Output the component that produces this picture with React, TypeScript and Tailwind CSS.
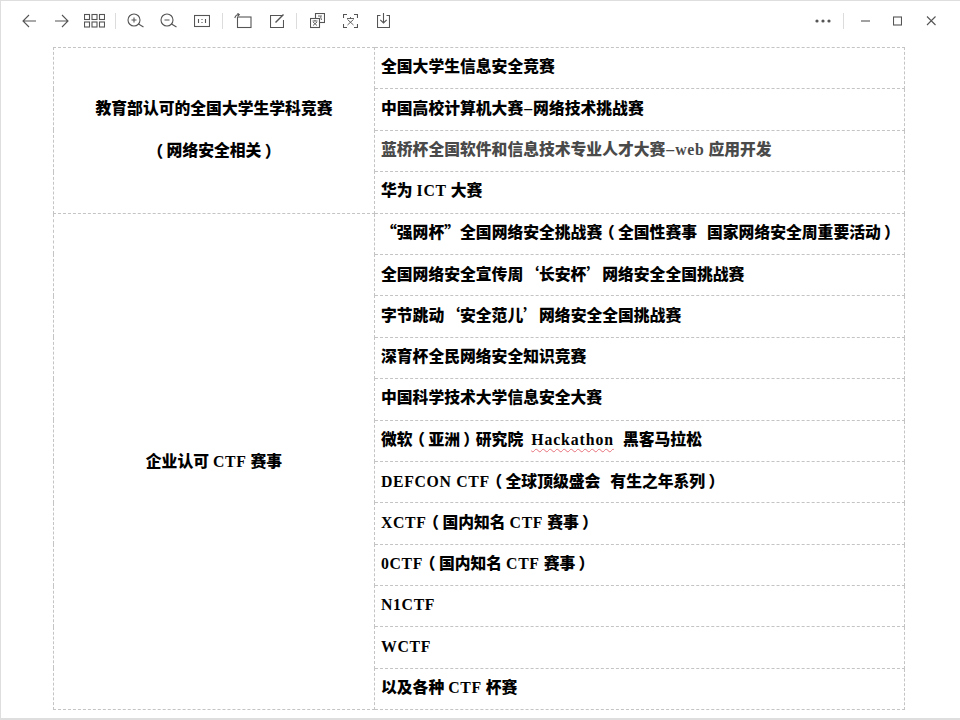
const font = '"Liberation Serif", "Noto Sans CJK SC", serif';

const Ic = ({ w = 20, children }: { w?: number; children: React.ReactNode }) => (
  <svg width={w} height={16} viewBox={`0 0 ${w} 16`} fill="none" stroke="#555" strokeWidth="1.1" className="shrink-0">
    {children}
  </svg>
);
const Sep = () => <div className="w-px h-4 bg-[#dcdcdc] shrink-0" />;
const Gap = ({ c }: { c: string }) => <div className={`shrink-0 ${c}`} />;

const L = ({ children }: { children: React.ReactNode }) => <span className="tracking-[0.65px]">{children}</span>;
const Q = ({ children }: { children: React.ReactNode }) => <span className="font-['Noto_Sans_CJK_SC']">{children}</span>;
const PO = () => <span className="inline-block w-[15.8px] text-center font-['Noto_Sans_CJK_SC'] [font-feature-settings:'palt']">（</span>;
const PC = () => <span className="inline-block w-[15.8px] text-center font-['Noto_Sans_CJK_SC'] [font-feature-settings:'palt']">）</span>;
const Sp = () => <span className="inline-block w-[4px]" />;

const rows1 = [
  { t: <>全国大学生信息安全竞赛</> },
  { t: <>中国高校计算机大赛<span className="mx-[1px]">–</span>网络技术挑战赛</> },
  { t: <>蓝桥杯全国软件和信息技术专业人才大赛<span className="mx-[1px]">–</span><L>web</L><Sp />应用开发</>, c: 'text-[#4a4a4a]' },
  { t: <>华为<Sp /><L>ICT</L><Sp />大赛</> },
];
const rows2 = [
  { t: <><Q>“</Q>强网杯<Q>”</Q>全国网络安全挑战赛<PO />全国性赛事<span className="inline-block w-[10px]" />国家网络安全周重要活动<PC /></> },
  { t: <>全国网络安全宣传周<Q>‘</Q>长安杯<Q>’</Q>网络安全全国挑战赛</> },
  { t: <>字节跳动<Q>‘</Q>安全范儿<Q>’</Q>网络安全全国挑战赛</> },
  { t: <>深育杯全民网络安全知识竞赛</> },
  { t: <>中国科学技术大学信息安全大赛</> },
  { t: <>微软<PO />亚洲<PC />研究院<span className="inline-block w-[8px]" /><span className="tracking-[0.9px] underline decoration-wavy decoration-[#e8707a] decoration-1 underline-offset-[3px]">Hackathon</span><span className="inline-block w-[9px]" />黑客马拉松</> },
  { t: <><L>DEFCON CTF</L><PO />全球顶级盛会<span className="inline-block w-[10px]" />有生之年系列<PC /></> },
  { t: <><L>XCTF</L><PO />国内知名<Sp /><L>CTF</L><Sp />赛事<PC /></> },
  { t: <><L>0CTF</L><PO />国内知名<Sp /><L>CTF</L><Sp />赛事<PC /></> },
  { t: <L>N1CTF</L> },
  { t: <L>WCTF</L> },
  { t: <>以及各种<Sp /><L>CTF</L><Sp />杯赛</> },
];

const cellR = 'border border-dashed border-[#c4c4c4] px-[6px] pb-[2px] h-[41.4px] text-left whitespace-nowrap';
const cellL = 'border border-dashed border-[#c4c4c4] text-center w-[321px] p-0';

export default function App() {
  return (
    <div
      className="w-[960px] h-[720px] bg-white border-t border-l border-b-2 border-[#dedede] flex flex-col overflow-hidden text-black"
      style={{ fontFamily: font }}
    >
      <div className="h-[46px] shrink-0 flex items-center pb-[7px] pl-[21px] pr-[24px]">
        <Ic w={14}><path d="M14 8H1M7 2L1 8l6 6" /></Ic>
        <Gap c="w-[19px]" />
        <Ic w={14}><path d="M0 8h13M7 2l6 6-6 6" /></Ic>
        <Gap c="w-[15px]" />
        <Ic w={21}>
          <rect x=".5" y="1.5" width="5" height="5" /><rect x="8" y="1.5" width="5" height="5" /><rect x="15.5" y="1.5" width="5" height="5" />
          <rect x=".5" y="9" width="5" height="5" /><rect x="8" y="9" width="5" height="5" /><rect x="15.5" y="9" width="5" height="5" />
        </Ic>
        <Gap c="w-[10px]" />
        <Sep />
        <Gap c="w-[11px]" />
        <Ic w={17}><circle cx="7" cy="7" r="6" /><path d="M11.5 11l5 3M7 4.5v5M4.5 7h5" /></Ic>
        <Gap c="w-[16px]" />
        <Ic w={17}><circle cx="7" cy="7" r="6" /><path d="M11.5 11l5 3M4.5 7h5" /></Ic>
        <Gap c="w-[17px]" />
        <Ic w={16}><rect x=".5" y="2.5" width="15" height="11" /><path d="M4.5 6v4M11.5 6v4M8 6v.9M8 9v.9" /></Ic>
        <Gap c="w-[12px]" />
        <Sep />
        <Gap c="w-[11px]" />
        <Ic w={18}><rect x="3.500" y="4" width="13.500" height="10.500" /><path d="M.8 5C1.300 3 2.500 1.500 5 1.500M3.500.3L5.300 1.600 3.900 3.200" /></Ic>
        <Gap c="w-[18px]" />
        <Ic w={14}><path d="M12.500 2.500H.5v12h13V7" /><path d="M5.500 9.500L13.500 1.500" strokeWidth="1.4" /></Ic>
        <Gap c="w-[12px]" />
        <Sep />
        <Gap c="w-[13px]" />
        <Ic w={15}>
          <rect x="5.500" y=".5" width="9" height="9" />
          <rect x=".5" y="5.500" width="9" height="9" fill="#fff" />
          <path d="M2.500 8h5M5 7v1M3 12.500l4-3.500M7 12.500L3 9M8 3h4M11.500 7l-1-3.500" strokeWidth=".9" />
        </Ic>
        <Gap c="w-[18px]" />
        <Ic w={15}>
          <path d="M.5 5V1.500H4M11 1.500h3.500V5M14.500 11v3.500H11M4 14.500H.5V11" />
          <path d="M4 5.500h7M7.500 4v1.500M4.500 12l6-5.500M10.500 12l-6-5.500" strokeWidth=".9" />
        </Ic>
        <Gap c="w-[19px]" />
        <Ic w={13}><path d="M3.500 2.500H.5v12h12v-12h-3M6.500 0v10M3.300 6.800l3.200 3.200 3.200-3.200" /></Ic>
        <div className="flex-1" />
        <svg width="16" height="4" viewBox="0 0 16 4" className="shrink-0"><circle cx="2" cy="2" r="1.6" fill="#555" /><circle cx="8" cy="2" r="1.6" fill="#555" /><circle cx="14" cy="2" r="1.6" fill="#555" /></svg>
        <Gap c="w-[12px]" />
        <Sep />
        <Gap c="w-[17px]" />
        <Ic w={9}><path d="M0 8h9" /></Ic>
        <Gap c="w-[23px]" />
        <Ic w={9}><rect x=".5" y="4" width="8" height="8" /></Ic>
        <Gap c="w-[24px]" />
        <Ic w={10}><path d="M1 3.500l8.500 8.500M9.500 3.500L1 12" /></Ic>
      </div>
      <div className="pl-[52px] flex-1">
        <table className="border-collapse w-[852px] table-fixed font-black text-[15.8px] leading-none">
          <colgroup>
            <col className="w-[321px]" />
            <col />
          </colgroup>
          <tbody>
            {rows1.map((r, i) => (
              <tr key={i} className="h-[41.4px]">
                {i === 0 && (
                  <td rowSpan={4} className={cellL}>
                    <div className="flex flex-col gap-[26px]">
                      <span>教育部认可的全国大学生学科竞赛</span>
                      <span className="flex justify-center"><PO />网络安全相关<PC /></span>
                    </div>
                  </td>
                )}
                <td className={`${cellR} ${r.c ?? ''}`}>{r.t}</td>
              </tr>
            ))}
            {rows2.map((r, i) => (
              <tr key={i} className="h-[41.4px]">
                {i === 0 && (
                  <td rowSpan={12} className={cellL}>企业认可<Sp /><L>CTF</L><Sp />赛事</td>
                )}
                <td className={cellR}>{r.t}</td>
              </tr>
            ))}
          </tbody>
        </table>
      </div>
    </div>
  );
}
